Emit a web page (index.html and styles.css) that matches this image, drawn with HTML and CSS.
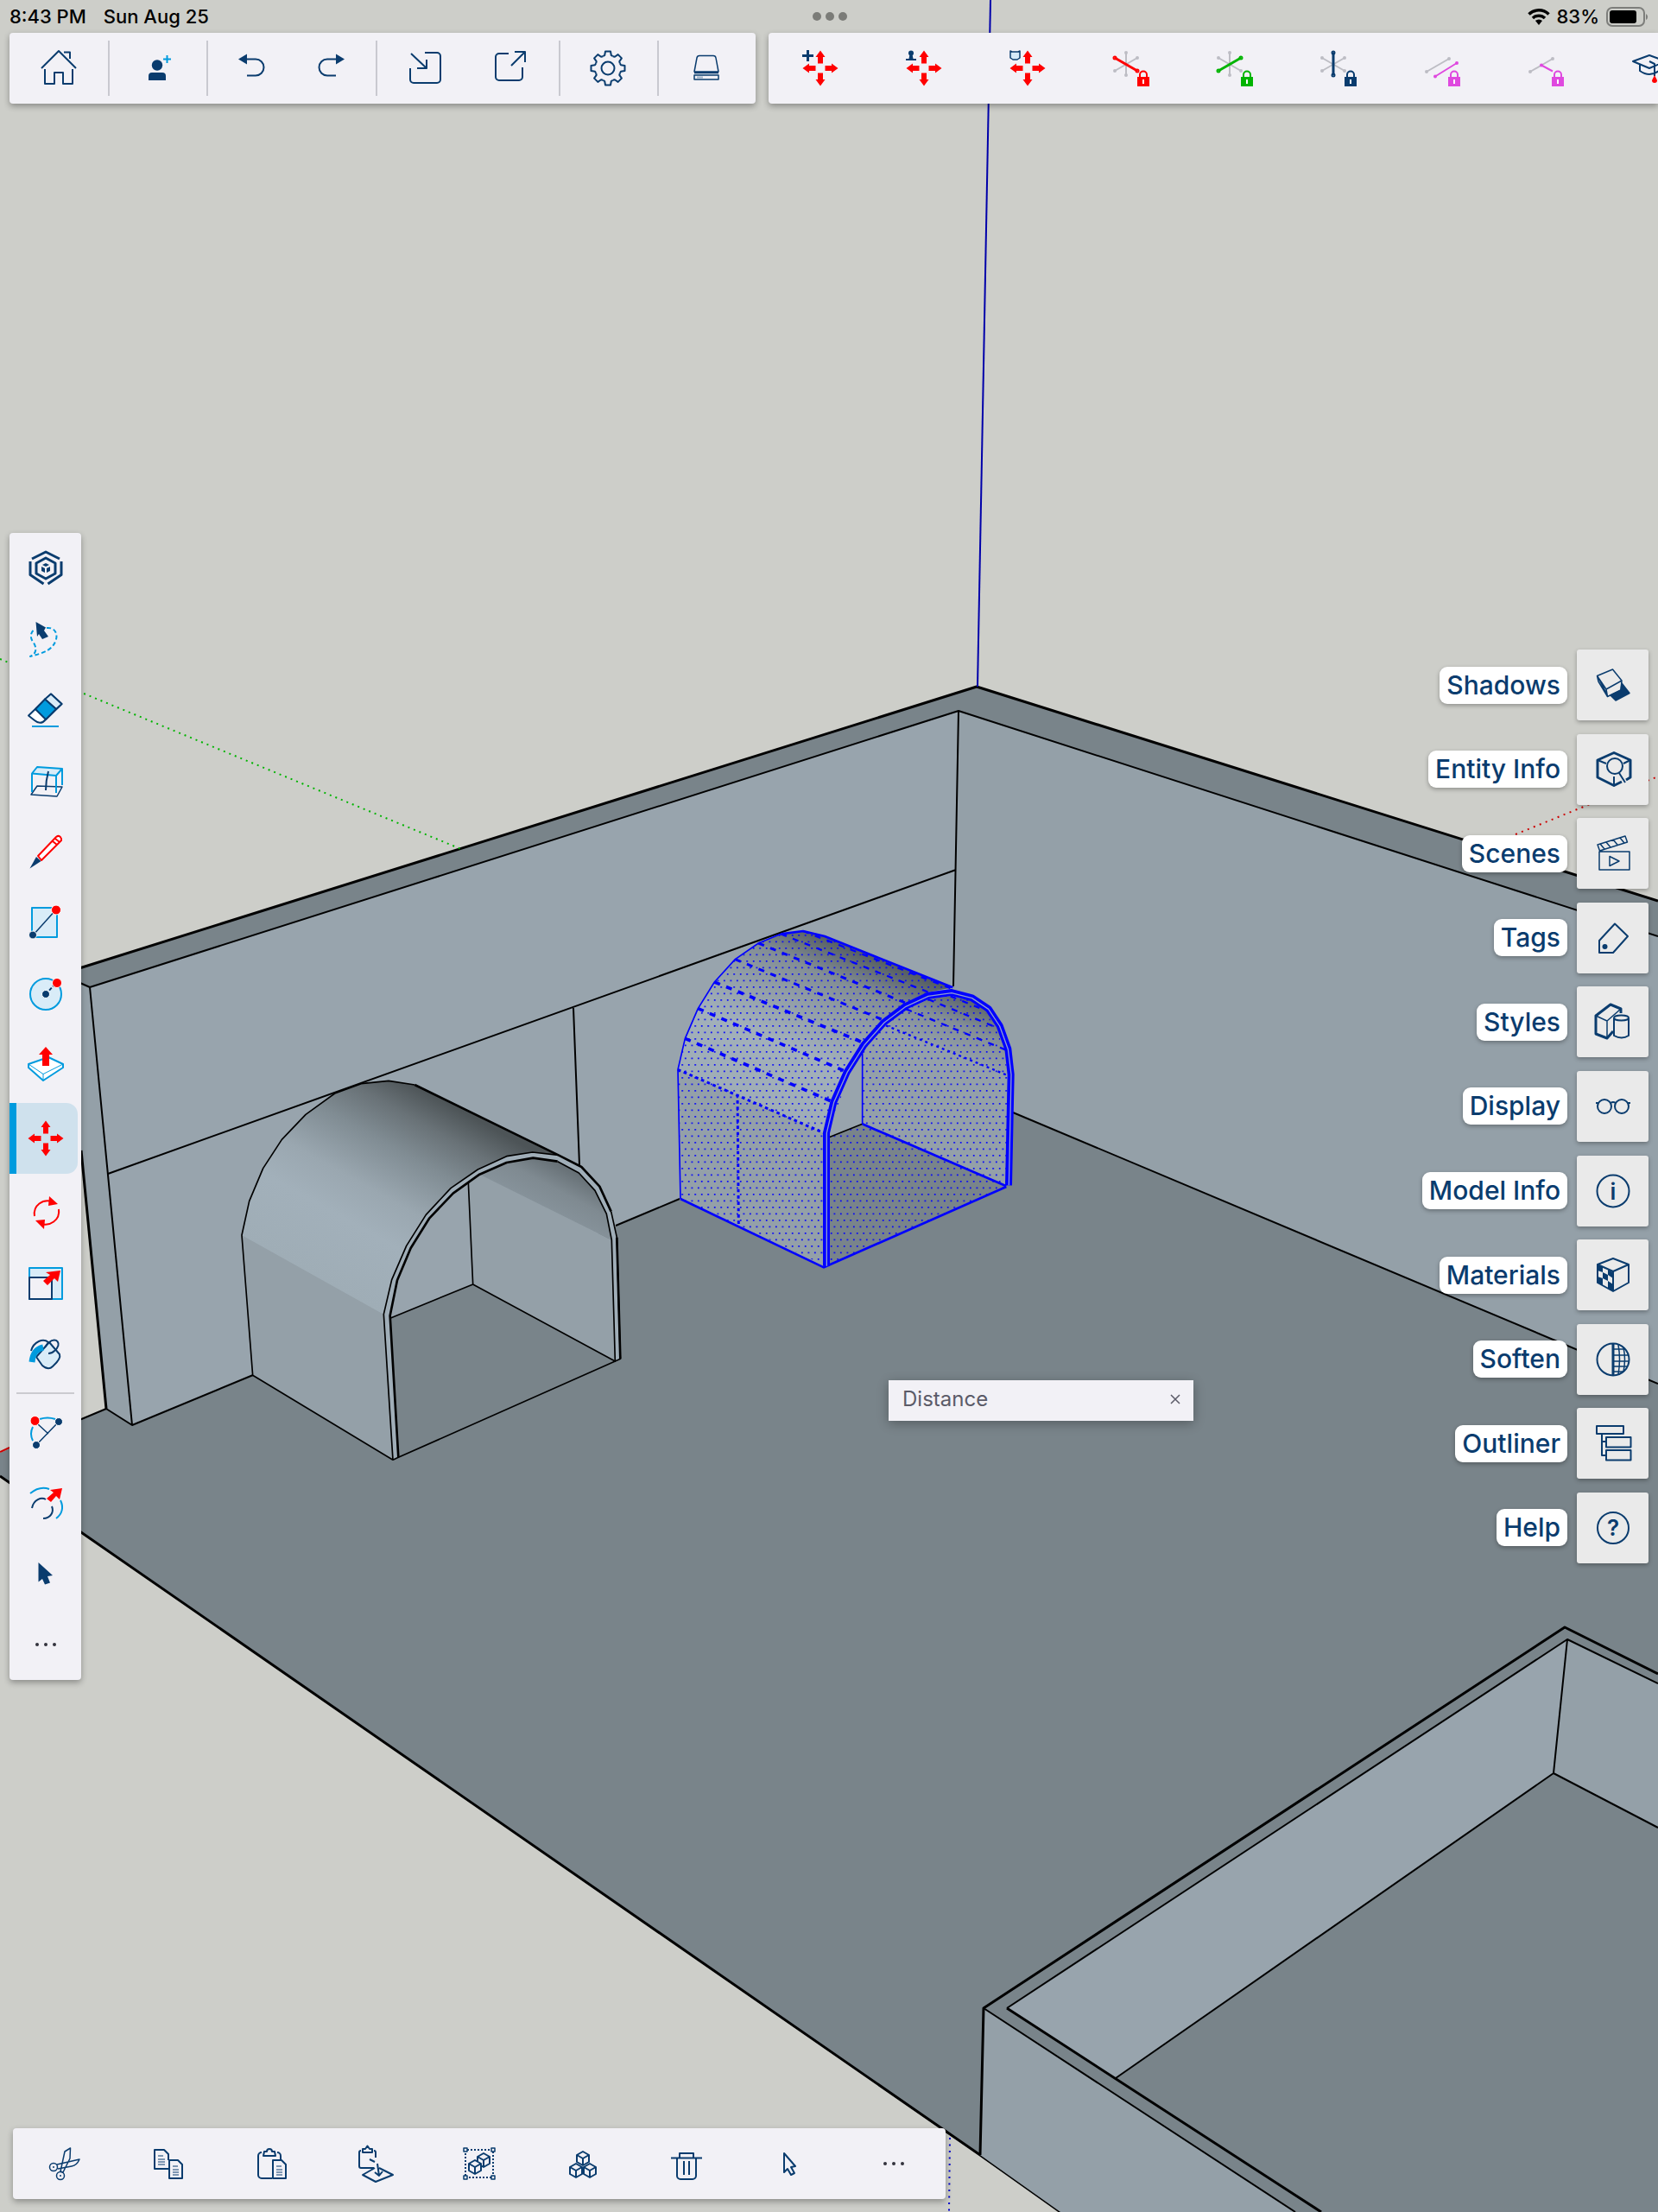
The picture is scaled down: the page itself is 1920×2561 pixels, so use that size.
FILE: index.html
```html
<!DOCTYPE html>
<html lang="en">
<head>
<meta charset="utf-8">
<meta name="viewport" content="width=device-width, initial-scale=1">
<title>3D Modeler</title>
<link rel="stylesheet" href="styles.css">
</head>
<body>
<div class="app">

<svg class="scene" viewBox="0 0 1920 2561" preserveAspectRatio="xMidYMid slice" aria-hidden="true">
  <defs>
    <linearGradient id="vault1" gradientUnits="userSpaceOnUse" x1="60" y1="600" x2="425" y2="-54">
      <stop offset="0" stop-color="#9fadb6"/><stop offset=".3" stop-color="#a2b0ba"/><stop offset=".48" stop-color="#9aa7b0"/><stop offset=".7" stop-color="#808c93"/><stop offset=".86" stop-color="#697277"/><stop offset="1" stop-color="#4d5457"/>
    </linearGradient>
    <linearGradient id="vault2" gradientUnits="userSpaceOnUse" x1="45" y1="535" x2="301" y2="-57">
      <stop offset="0" stop-color="#9fadb6"/><stop offset=".35" stop-color="#a2b0b9"/><stop offset=".6" stop-color="#929ea6"/><stop offset=".78" stop-color="#838e95"/><stop offset="1" stop-color="#50585c"/>
    </linearGradient>
    <linearGradient id="under1" gradientUnits="userSpaceOnUse" x1="1100" y1="500" x2="1190" y2="330">
      <stop offset="0" stop-color="#86929a"/><stop offset=".4" stop-color="#7f8a91"/><stop offset="1" stop-color="#5d666b"/>
    </linearGradient>
    <linearGradient id="under2" gradientUnits="userSpaceOnUse" x1="980" y1="470" x2="1055" y2="280">
      <stop offset="0" stop-color="#929ea6"/><stop offset=".5" stop-color="#838e95"/><stop offset="1" stop-color="#586166"/>
    </linearGradient>
    <pattern id="dots" width="22.5" height="45" patternUnits="userSpaceOnUse" x="58" y="606">
      <path fill="#00f" d="M0 0h5v5H0zM11 22.5h5v5h-5z"/>
    </pattern>
  </defs>

  <!-- floor and walls -->
  <path fill="#79848a" d="M0 1682L94 1643L123 1631L153 1650L1102 1259L1920 1602V2561H1228L0 1709Z"/>
  <path fill="#98a4ad" d="M104 1143L1110 823L1102 1259L153 1650Z"/>
  <path fill="#94a0a8" d="M1110 823L1920 1084V1602L1102 1259Z"/>
  <path fill="#94a0a8" d="M70 1130L104 1143L153 1650L123 1631L94 1332Z"/>
  <path fill="#79848a" d="M60 1131L1131 795L1920 1043V1084L1110 823L104 1143Z"/>
  <g class="edge thick">
    <path d="M60 1131L1131 795L1920 1043"/>
    <path d="M94 1332L123 1631"/>
    <path d="M0 1709L1135 2495L1228 2561"/>
  </g>
  <g class="edge">
    <path d="M84 1134L104 1143L1110 823L1920 1084M104 1143L153 1650L123 1631L80 1649M153 1650L293 1592M713 1419L787 1388M1173 1288L1920 1602"/>
    <path d="M125 1359L1107 1007M1110 823L1104 1142M664 1167L671 1349"/>
  </g>
  <path stroke="#c00" stroke-width="2" d="M0 1681L11 1676"/>

  <!-- model axes -->
  <path stroke="#00a" stroke-width="2" d="M1147 0L1132 795"/>
  <path stroke="#00b400" stroke-width="2" stroke-dasharray="2 5" d="M0 763L534 983"/>
  <path stroke="#c00" stroke-width="2" stroke-dasharray="2 5.500" d="M1755 966L1920 899"/>
  <path stroke="#00c" stroke-width="2" stroke-dasharray="2 5.500" d="M1100 2475L1099 2561"/>

  <!-- sunken pool -->
  <path fill="#98a4ad" d="M1166 2325L1815 1898L1799 2053L1292 2406Z"/>
  <path fill="#94a0a8" d="M1815 1898L1920 1949V2116L1799 2053Z"/>
  <path fill="#94a0a8" d="M1139 2325L1500 2561H1228L1135 2495Z"/>
  <g class="edge">
    <path d="M1920 1949L1815 1898L1166 2325M1815 1898L1799 2053L1292 2406M1799 2053L1920 2116M1139 2325L1500 2561"/>
    <path class="thick" d="M1920 1938L1812 1884L1139 2325L1135 2495M1166 2325L1530 2561"/>
  </g>

  <!-- plain tunnel -->
  <g transform="translate(260 1230) scale(.33333)" stroke-linejoin="round">
    <path fill="#79848a" d="M575 888L863 771L1357 1038L604 1372Z"/>
    <path fill="#98a4ad" d="M575 880L600 757L712 541L847 418L863 771L577 888Z"/>
    <path fill="#94a0a8" d="M847 418L886 389L1345 617L1357 1038L863 771Z"/>
    <path fill="url(#under1)" d="M886 389L980 348L1072 332L1157 344L1231 384L1287 445L1327 526L1345 617Z"/>
    <path fill="#94a0a8" d="M60 600L553 875L585 1381L98 1087Z"/>
    <path fill="url(#vault1)" d="M60 600L86 482L134 368L199 268L282 181L383 108L475 74L570 64L661 78L1160 322L1070 312L980 326L880 372L786 437L700 529L632 637L581 755L553 875Z"/>
    <path fill="#a0aeb8" d="M585 1381L553 875L581 755L632 637L700 529L786 437L880 372L980 326L1070 312L1160 322L1240 363L1303 431L1343 518L1363 608L1375 1030L1357 1038L1345 617L1327 526L1287 445L1231 384L1157 344L1072 332L980 348L886 389L794 455L712 541L647 645L600 757L575 880L604 1372Z"/>
    <g fill="none" stroke="#000" stroke-width="5">
      <path d="M585 1381L98 1087L60 600L86 482L134 368L199 268L282 181L383 108L475 74L570 64L661 78"/>
      <path stroke-width="8" d="M661 78L1160 322L1240 363L1303 431L1343 518"/>
      <path d="M585 1381L553 875L581 755L632 637L700 529L786 437L880 372L980 326L1070 312L1160 322"/>
      <path d="M1343 518L1363 608L1375 1030L1357 1038L1345 617L1327 526L1287 445L1231 384L1157 344"/>
      <path stroke-width="8" d="M1157 344L1072 332L980 348L886 389L794 455L712 541L647 645L600 757L575 880L604 1372M1363 608L1375 1030"/>
      <path d="M847 418L863 771L577 888M863 771L1357 1038L604 1372L585 1381"/>
    </g>
  </g>

  <!-- selected tunnel -->
  <g transform="translate(770 1060) scale(.33333)" stroke-linejoin="round">
    <path fill="#79848a" d="M570 770L686 724L1186 940L570 1217Z"/>
    <path fill="#98a4ad" d="M570 755L640 548L686 478V724L570 770Z"/>
    <path fill="#94a0a8" d="M686 478L765 380L1195 555L1186 940L686 724Z"/>
    <path fill="url(#under2)" d="M765 380L838 328L915 291L992 280L1065 296L1115 330L1155 390L1185 467L1195 555Z"/>
    <path fill="#94a0a8" d="M45 535L552 755V1222L54 984Z"/>
    <path fill="url(#vault2)" d="M45 535L70 427L115 323L172 231L244 152L325 96L403 64L480 54L555 72L1000 250L915 266L835 303L757 362L686 440L625 540L578 645L552 755Z"/>
    <path fill="url(#dots)" d="M45 535L70 427L115 323L172 231L244 152L325 96L403 64L480 54L555 72L1065 275L1155 390L1195 555L1186 940L560 1217L54 984ZM570 770L686 724V478L640 548L570 755Z" fill-rule="evenodd"/>
    <path fill="none" stroke="#000" stroke-width="5" d="M570 770L686 724"/>
    <g fill="none" stroke="#00f" stroke-width="8">
      <path stroke-width="5" d="M403 64L325 96L244 152L172 231L115 323L70 427L45 535L54 984"/>
      <path d="M54 984L552 1222L1186 942M403 64L480 54L555 72L1000 250M686 724L1186 940"/>
      <path stroke-width="5" d="M686 478V724"/>
      <path stroke-width="24" d="M561 1217V755L586 648L632 544L692 449L761 371L836 315L915 278L996 267L1067 286L1124 324L1163 383L1192 463L1202 552L1194 937"/>
      <path stroke="#8f9dd0" stroke-width="4" d="M562 1217V755L587 649L633 545L693 450L762 372L837 316L915 280L996 269L1067 287L1124 325L1163 384L1192 464L1203 552L1195 937"/>
      <g stroke-dasharray="21 23">
        <path d="M70 427L578 645M115 323L625 540M172 231L686 440" stroke-width="11"/>
        <path d="M244 152L757 362M325 96L835 303" stroke-width="9"/>
        <path d="M403 64L915 266M480 54L1000 256M838 325L1185 467M915 291L1155 390M992 280L1115 330" stroke-width="7"/>
      </g>
      <path stroke-dasharray="11 11" stroke-width="9" d="M45 535L552 755M252 620L256 1080"/>
      <path stroke-dasharray="9 12" stroke-width="7" d="M768 382L1190 555"/>
    </g>
  </g>
</svg>

<svg class="sprites" aria-hidden="true">
  <defs>
    <path id="arm" d="M0-20.5L5.5-13H3V-5.500H-3V-13H-5.500Z"/>
    <g id="arrows"><use href="#arm"/><use href="#arm" transform="rotate(90)"/><use href="#arm" transform="rotate(180)"/><use href="#arm" transform="rotate(270)"/></g>
    <path id="tooth" d="M-5.700-13.800L-3.800-15L-3-19.500H3L3.800-15L5.700-13.800"/>
    <g id="lock" stroke="none"><path fill="currentColor" d="M7 10h14v11H7z"/><path fill="none" stroke="currentColor" stroke-width="2" d="M10 10V7.500a4 4 0 0 1 8 0V10"/><path fill="#fff" d="M13 13h2v5h-2z"/></g>
    <g id="spokeV"><path d="M-6-18V8"/><circle cx="-6" cy="-18" r="1"/><circle cx="-6" cy="8" r="1"/></g>
    <g id="spokeD"><path d="M-19-12L7 3"/><circle cx="-19" cy="-12" r="1"/><circle cx="7" cy="3" r="1"/></g>
    <g id="spokeU"><path d="M-19 3L7-12"/><circle cx="-19" cy="3" r="1"/><circle cx="7" cy="-12" r="1"/></g>
    <g id="page"><path d="M1-4H11L16 1V17H1Z"/><path stroke-width="1" d="M5 3h6M5 7h7M5 10h7M5 13h7"/></g>
    <g id="cube"><path d="M0-8L7-4V4L0 8L-7 4V-4Z"/><path d="M-7-4L0 0L7-4M0 0V8"/></g>
  </defs>
</svg>

<header class="status">
  <div class="status-side"><time>8:43 PM</time><span>Sun Aug 25</span></div>
  <div class="status-dots"><i></i><i></i><i></i></div>
  <div class="status-side status-end">
    <svg width="26" height="20" viewBox="0 0 26 20" fill="none" stroke="#000" stroke-width="3.500" aria-label="Wi-Fi"><path d="M1.500 7.500a16.500 16.500 0 0 1 23 0M6 12a10 10 0 0 1 14 0"/><path fill="#000" stroke="none" d="M13 20l-4-5a6 6 0 0 1 8 0z"/></svg>
    <span>83%</span>
    <svg class="battery" width="50" height="23" viewBox="0 0 50 23" aria-label="Battery"><rect x="1" y="1" width="43" height="21" rx="6" fill="none" stroke="#7d7e7b" stroke-width="2"/><rect x="4" y="4" width="31" height="15" rx="3"/><path fill="#7d7e7b" d="M46 8a4 4 0 0 1 0 7z"/></svg>
  </div>
</header>

<nav class="topbars">
  <div class="bar">
    <div class="group"><button aria-label="Home"><svg class="ico" viewBox="-22 -22 44 44"><path d="M-20 0L0-20L20 0M-16 1V18H-5V5H5V18H16V1M6-18.500H13V-11"/></svg></button></div>
    <div class="group"><button aria-label="Invite"><svg class="ico" viewBox="-22 -22 44 44"><g fill="currentColor" stroke="none"><circle cy="-3.500" r="6.200"/><path d="M-10 14V9a4 4 0 0 1 4-4H6a4 4 0 0 1 4 4v5z"/></g><path stroke="#009bde" d="M7-10.500h9M11.500-15v9"/></svg></button></div>
    <div class="group narrow">
      <button aria-label="Undo"><svg class="ico" viewBox="-22 -22 44 44"><path d="M-8-10.500H4A9.500 9.500 0 0 1 4 8.500H-6"/><path fill="currentColor" stroke="none" d="M-16-10.500l10-6v12z"/></svg></button>
      <button aria-label="Redo"><svg class="ico" viewBox="-22 -22 44 44"><path d="M8-10.500H-4A9.500 9.500 0 0 0-4 8.500H6"/><path fill="currentColor" stroke="none" d="M16-10.500l-10-6v12z"/></svg></button>
    </div>
    <div class="group wide">
      <button aria-label="Import"><svg class="ico" viewBox="-22 -22 44 44"><path d="M0-18H14a4 4 0 0 1 4 4V13a4 4 0 0 1-4 4H-13a4 4 0 0 1-4-4V0M-16-17L2 0V-10M2 0H-9"/></svg></button>
      <button aria-label="Export"><svg class="ico" viewBox="-22 -22 44 44"><path d="M-2-17H-13a4 4 0 0 0-4 4V10a4 4 0 0 0 4 4H10a4 4 0 0 0 4-4V-1M1-3L17-19V-7M17-19H5"/></svg></button>
    </div>
    <div class="group"><button aria-label="Settings"><svg class="ico" viewBox="-22 -22 44 44"><circle r="7.500"/><use href="#tooth"/><use href="#tooth" transform="rotate(45)"/><use href="#tooth" transform="rotate(90)"/><use href="#tooth" transform="rotate(135)"/><use href="#tooth" transform="rotate(180)"/><use href="#tooth" transform="rotate(225)"/><use href="#tooth" transform="rotate(270)"/><use href="#tooth" transform="rotate(315)"/></svg></button></div>
    <div class="group"><button aria-label="Storage"><svg class="ico thin" viewBox="-22 -22 44 44"><path d="M-14 4L-11-12a3 3 0 0 1 3-2.500H8a3 3 0 0 1 3 2.500L14 4zM-14 5.500H14M-14 8H14V13H-14z"/><path fill="#9fb3c8" stroke="none" d="M-11 9.500h7v2h-7z"/></svg></button></div>
  </div>

  <div class="bar bleed">
    <button aria-label="Move copy"><svg class="ico" viewBox="-22 -22 44 44"><use class="red" href="#arrows"/><path stroke-width="3" d="M-21-14.500h13M-14.500-21v13"/></svg></button>
    <button aria-label="Move stamp"><svg class="ico" viewBox="-22 -22 44 44"><use class="red" href="#arrows"/><g fill="currentColor" stroke="none"><circle cx="-15" cy="-17.500" r="3"/><path d="M-16.500-16h3l1 5h-5zM-21-11h12v2h-12z"/></g></svg></button>
    <button aria-label="Move and paste"><svg class="ico" viewBox="-22 -22 44 44"><use class="red" href="#arrows"/><path fill="#d5eaf8" stroke-width="1.500" d="M-20-20l2 1h7l2-1V-12l-3 2h-5l-3-2z"/></svg></button>
    <button aria-label="Lock red axis"><svg class="ico" viewBox="-22 -22 44 44"><g class="gray"><use href="#spokeV"/><use href="#spokeU"/></g><g color="#f00" stroke="#f00" stroke-width="3"><use href="#spokeD"/><use href="#lock"/></g></svg></button>
    <button aria-label="Lock green axis"><svg class="ico" viewBox="-22 -22 44 44"><g class="gray"><use href="#spokeV"/><use href="#spokeD"/></g><g color="#00b400" stroke="#00b400" stroke-width="3"><use href="#spokeU"/><use href="#lock"/></g></svg></button>
    <button aria-label="Lock blue axis"><svg class="ico" viewBox="-22 -22 44 44"><g class="gray"><use href="#spokeU"/><use href="#spokeD"/></g><g stroke-width="3"><use href="#spokeV"/><use href="#lock"/></g></svg></button>
    <button aria-label="Lock parallel"><svg class="ico" viewBox="-22 -22 44 44"><g class="gray"><path d="M-18 4L8-11"/><circle cx="-18" cy="4" r="1"/><circle cx="8" cy="-11" r="1"/></g><g color="#df49df" stroke="#df49df"><path d="M-8 9.500L17-6"/><circle cx="-8" cy="9.500" r="1"/><circle cx="17" cy="-6" r="1"/><use href="#lock"/></g></svg></button>
    <button aria-label="Lock perpendicular"><svg class="ico" viewBox="-22 -22 44 44"><g class="gray"><path d="M-18 4L8-11"/><circle cx="-18" cy="4" r="1"/><circle cx="8" cy="-11" r="1"/></g><g color="#df49df" stroke="#df49df"><path d="M-5-3.500L8 3.500"/><circle cx="-5" cy="-3.500" r="1"/><use href="#lock"/></g></svg></button>
    <button aria-label="Learn"><svg class="ico" viewBox="-22 -22 44 44"><path d="M-19-8L0-15L19-8L0 0ZM-11-5V3Q0 11 11 3V-5M0-8L6-5V9"/><path fill="#f00" stroke="none" d="M6 8l3 6a3 3 0 0 1-6 0z"/></svg></button>
  </div>
</nav>

<main class="workspace">
  <nav class="tools">
    <button aria-label="Home base"><svg class="ico" viewBox="-22 -22 44 44"><path stroke-width="3" d="M-16-11L0-19L16-11M-18-8V7.500L-2.500 18M18-8V7.500L2.500 18M0-12L11-6V6L0 12L-11 6V-6Z"/><path fill="currentColor" stroke="none" d="M0-6L4-4L0-2L-4-4ZM-5-2L-1 0V5L-5 3ZM5-2L1 0V5L5 3Z"/></svg></button>
    <button aria-label="Lasso"><svg class="ico" viewBox="-22 -22 44 44"><path class="blue" stroke-dasharray="5 3" d="M1-13C10-14 14-7 12 0C9 12-2 16-18 20C-9 16-11 8-15 3C-19-3-17-9-13-11"/><path fill="currentColor" stroke="none" d="M-11.500-20L0-13.500L-2-10L3-3L-4 0L-8-6L-10-3Z"/></svg></button>
    <button aria-label="Eraser"><svg class="ico" viewBox="-22 -22 44 44"><path fill="#fff" d="M6-18.500L18.500-7L0 11Q-6 18-13 12L-20 6.500Z"/><path fill="#d9ecf8" d="M6-18.500L18.500-7L12-1L-1-12.500Z"/><path fill="#009bde" d="M-1-12.500L12-1L0 11L-12-1Z"/><path class="blue" d="M-16 19H15"/></svg></button>
    <button aria-label="Section plane"><svg class="ico" viewBox="-22 -22 44 44"><path stroke-width="1.500" d="M-10 6L19 7L13 18L-17 16Z"/><path class="blue pale" d="M-10-16L19-14L12-6L-16-8.500Z"/><path class="blue" d="M-16-8V13M12-6V14M19-14V5"/><path d="M3-11Q0 0 0 11"/></svg></button>
    <button aria-label="Line"><svg class="ico" viewBox="-22 -22 44 44"><path fill="currentColor" stroke="none" d="M-18.500 19.500L-11 6L-5.500 11Z"/><path fill="#fff" stroke="#f00" d="M-9 5L12-17Q16-20 18-15L18-13L-5 10ZM8-12L13-8M11-15L16-11"/></svg></button>
    <button aria-label="Rectangle"><svg class="ico" viewBox="-22 -22 44 44"><path class="blue pale" d="M-16-17H13V17H-16Z"/><path stroke-width="1.500" d="M-15 15L12-15"/><circle class="dot" cx="-15" cy="14.500" r="4.500"/><circle class="dot hot" cx="12" cy="-14.500" r="5.500"/></svg></button>
    <button aria-label="Circle"><svg class="ico" viewBox="-22 -22 44 44"><circle class="blue pale" cy="1" r="18"/><path d="M0 1L12-12" stroke-dasharray="4 2"/><circle class="dot" cy="1" r="4.500"/><circle class="dot hot" cx="13" cy="-12" r="5.500"/></svg></button>
    <button aria-label="Push pull"><svg class="ico" viewBox="-22 -22 44 44"><path class="blue" fill="#fff" d="M-20 0L3-8L20 0V4L-3 19L-20 4Z"/><path class="blue" stroke-width="1" d="M-20 0L-3 11.500L20 0M-3 11.500V19"/><path class="red" stroke="#fff" d="M0-20L8-11H4V2H-4V-11H-8Z"/></svg></button>
    <button class="active" aria-label="Move" aria-pressed="true"><svg class="ico" viewBox="-22 -22 44 44"><use class="red" href="#arrows"/></svg></button>
    <button aria-label="Rotate"><svg class="ico" viewBox="-22 -22 44 44"><g stroke="#f00"><path d="M-13 4C-15-9-3-16 7-13M15-4C17 9 4 16-5 13"/></g><path class="red" d="M4-19L14-10L3-8ZM-2 19L-12 9L-1 8Z"/></svg></button>
    <button aria-label="Scale"><svg class="ico" viewBox="-22 -22 44 44"><path class="blue pale" d="M-19-18H19V18H-19Z"/><path fill="#f2f1f6" d="M-19-7H7V18H-19Z"/><path class="red" d="M17-15L14-2L10-6L2 2L-3-3L5-10L0-13Z"/></svg></button>
    <button aria-label="Paint"><svg class="ico" viewBox="-22 -22 44 44"><path fill="#d9ecf8" d="M-11 3L4-14L16 0Q18 5 8 14Q3 19-4 13Z"/><path d="M-17-4C-14-15-3-19 3-14L-1-8M4-14C12-21 20-12 10-4Q7-1 3-1"/><path stroke="#009bde" stroke-width="7" d="M-3-8C-12-6-15 0-16 9"/></svg></button>
    <hr>
    <button aria-label="Arc"><svg class="ico" viewBox="-22 -22 44 44"><path class="blue" d="M-7-15Q2-18 11-15M-15-6Q-19 2-15 10"/><path stroke-width="1.500" d="M-9-9L3 2M-11 15L15-12"/><circle class="dot hot" cx="-12.500" cy="-13" r="5.500"/><circle class="dot" cx="15" cy="-12" r="4.500"/><circle class="dot" cx="-11" cy="15" r="4.500"/></svg></button>
    <button aria-label="Offset"><svg class="ico" viewBox="-22 -22 44 44"><path class="blue" d="M-18-11Q-7-20 4-16M17-3C21 5 19 13 12 18"/><path d="M-16 6C-14-4-5-7 0-4M7 4C10 11 5 18-3 18"/><path class="red" d="M19-17L16-4L12-8L6-1L1-5L9-12L5-15Z"/></svg></button>
    <button aria-label="Select"><svg class="ico" viewBox="-22 -22 44 44"><path fill="currentColor" stroke="none" d="M-8.500-13L8 2L2 3L5 10.500L-1 12.500L-4 6L-8.500 9.500Z"/></svg></button>
    <button aria-label="More tools"><svg class="ico" viewBox="-22 -22 44 44"><g fill="#33333d" stroke="none"><circle cx="-10" r="2"/><circle r="2"/><circle cx="10" r="2"/></g></svg></button>
  </nav>

  <nav class="panels">
    <button><span class="label">Shadows</span><span class="tile"><svg class="ico thin" viewBox="-22 -22 44 44"><path d="M-18.500-10.500L-.5-18L10-5L-8 5ZM-18.500-10.500L-17-4L-6.500 13.500L-8 5M-6.500 13.500L9 6L10-5M-17-8L-7 11"/><path fill="currentColor" d="M10-2L19 9.500L3 18L-3 12L9 6Z"/></svg></span></button>
    <button><span class="label">Entity Info</span><span class="tile"><svg class="ico" viewBox="-22 -22 44 44"><path stroke-width="3" d="M10 14L1 18.500L-18 9V-11L1-19.500L20-11V9L15 12"/><circle cx="2" cy="-4" r="9"/><path d="M-18-11L-8-7M20-11L12-7M1 8V18M7 4L14 15"/></svg></span></button>
    <button><span class="label">Scenes</span><span class="tile"><svg class="ico thin" viewBox="-22 -22 44 44"><path d="M-16-2H19V19H-16ZM-4 3.500L7 9L-4 14.500ZM-18-10L14-20L16.500-13L-15.500-3ZM-15-11L-10-5M-8-13L-3-7M0-16L5-10M8-18L13-12M-13-4V-2"/></svg></span></button>
    <button><span class="label">Tags</span><span class="tile"><svg class="ico" viewBox="-22 -22 44 44"><path d="M-16 17V3L2-16.500L17-2L0 17Z"/><circle cx="-9.500" cy="10" r="3" fill="currentColor" stroke="none"/></svg></span></button>
    <button><span class="label">Styles</span><span class="tile"><svg class="ico" viewBox="-22 -22 44 44"><path stroke-width="3" d="M9-10V-15L-3-20L-20-7V14L-7 19L0 11"/><path stroke-width="1.500" d="M-20-7L-7-1L9-15M-7-1V19"/><path d="M1-4V16Q10 21 18 16V-4"/><ellipse cx="9.500" cy="-4.500" rx="8.500" ry="3"/></svg></span></button>
    <button><span class="label">Display</span><span class="tile"><svg class="ico" viewBox="-22 -22 44 44"><circle cx="-10" r="8"/><circle cx="10" r="8"/><path d="M-20-4H-17M17-4H20M-3-4Q0-6 3-4"/></svg></span></button>
    <button><span class="label">Model Info</span><span class="tile"><svg class="ico" viewBox="-22 -22 44 44"><circle r="18.500"/><text y="10">i</text></svg></span></button>
    <button><span class="label">Materials</span><span class="tile"><svg class="ico" viewBox="-22 -22 44 44"><path d="M0-19L18-12V9L0 19L-18 9V-12ZM-18-12L0-4L18-12M0-4V19"/><path fill="currentColor" stroke="none" d="M-18-12L-12-9V-3L-18-5ZM-12-3L-6 0V7L-12 4ZM-6-6L0-3V4L-6 0ZM-18 2L-12 4V12L-18 9ZM-6 7L0 11V19L-6 15Z"/></svg></span></button>
    <button><span class="label">Soften</span><span class="tile"><svg class="ico" viewBox="-22 -22 44 44"><circle r="18.500"/><path stroke-width="3" d="M0-18V18"/><path stroke-width="1.500" d="M6-17Q9 0 6 17M12-14Q15 0 12 14M0-12H14M0-5H18M0 2H18M0 8H17M0 14H12"/></svg></span></button>
    <button><span class="label">Outliner</span><span class="tile"><svg class="ico" viewBox="-22 -22 44 44"><path d="M-19-20H12V-11H-19ZM-8-7H20.500V4.500H-8ZM-8 8H20.500V19.500H-8ZM-13-11V14H-8M-13-2H-8"/></svg></span></button>
    <button><span class="label">Help</span><span class="tile"><svg class="ico" viewBox="-22 -22 44 44"><circle r="18"/><text y="9">?</text></svg></span></button>
  </nav>
</main>

<footer class="bottom">
  <div class="bar">
    <button aria-label="Cut"><svg class="ico thin" viewBox="-22 -22 44 44"><circle cx="-13" cy="4" r="4.500"/><circle cx="-5" cy="14" r="4.500"/><path d="M6.500-18L0-14L-5 9L-2 10L6-6ZM-9 1L17-5Q14 2 8 3L-8 6M-13 3v2M-5 13v2"/></svg></button>
    <button aria-label="Copy"><svg class="ico" viewBox="-22 -22 44 44"><path d="M0 6H-16V-16H-5L0-11V-4"/><path stroke-width="1" d="M-12-9h6M-12-5h8M-12-2h8M-12 1h8"/><use href="#page"/></svg></button>
    <button aria-label="Paste"><svg class="ico" viewBox="-22 -22 44 44"><path d="M0 17H-12a4 4 0 0 1-4-4V-9a4 4 0 0 1 4-4M6-13a4 4 0 0 1 4 4v4M-10-9H4L3-14H0a3 3 0 0 0-6 0H-9Z"/><use href="#page"/></svg></button>
    <button aria-label="Paste in place"><svg class="ico" viewBox="-22 -22 44 44"><path d="M-2 5H-17a2 2 0 0 1-2-2V-13a2 2 0 0 1 2-2M-2-15a2 2 0 0 1 2 2V-7M-15-13H-4V-17H-7L-9.500-20.500L-12-17H-15ZM-7-5L-1-2M-1 5L-15 13L0 21L20 13L4 5M2 0L4 14M-1 10L4 14L8 9"/></svg></button>
    <button aria-label="Group"><svg class="ico" viewBox="-22 -22 44 44"><path stroke-dasharray="2 2" d="M-14-16H14M16-14V14M14 16H-14M-16 14V-14"/><path fill="#f2f1f6" stroke-width="1.500" d="M-18-18h4v4h-4zM14-18h4v4h-4zM14 14h4v4h-4zM-18 14h4v4h-4z"/><g stroke-width="2"><use href="#cube" x="5" y="-4"/><g fill="#f2f1f6"><use href="#cube" x="-5" y="4"/></g></g></svg></button>
    <button aria-label="Components"><svg class="ico" viewBox="-22 -22 44 44"><use href="#cube" y="-6"/><use href="#cube" x="-8" y="8"/><use href="#cube" x="8" y="8"/></svg></button>
    <button aria-label="Delete"><svg class="ico" viewBox="-22 -22 44 44"><path d="M-18-6.500H18M-8-7V-12H8V-7M-11-6V14a4 4 0 0 0 4 4H7a4 4 0 0 0 4-4V-6M-3-3V13M3-3V13"/></svg></button>
    <button aria-label="Select"><svg class="ico" viewBox="-22 -22 44 44"><path d="M-7-12L6 3L1 4L5 11L1 13L-3 6L-7 10Z"/></svg></button>
    <button aria-label="More"><svg class="ico" viewBox="-22 -22 44 44"><g fill="#33333d" stroke="none"><circle cx="-10" r="2"/><circle r="2"/><circle cx="10" r="2"/></g></svg></button>
  </div>
</footer>

<form class="measure">
  <input type="text" placeholder="Distance" aria-label="Distance">
  <button type="button" aria-label="Close"><svg width="12" height="12" viewBox="0 0 12 12"><path stroke="#5b5b68" stroke-width="1.500" d="M1 1L11 11M11 1L1 11"/></svg></button>
</form>

</div>
</body>
</html>
```
FILE: styles.css
```css
* { box-sizing: border-box; }

body {
  margin: 0;
  background: #cdcec9;
  color: #0a3c6e;
  font-family: Inter, "Liberation Sans", sans-serif;
}

button {
  display: flex;
  align-items: center;
  justify-content: center;
  margin: 0;
  padding: 0;
  border: 0;
  background: none;
  color: inherit;
  font: inherit;
}

.app {
  position: relative;
  display: flex;
  flex-direction: column;
  min-height: 100vh;
  overflow: hidden;
}

/* model canvas behind the controls */
.scene {
  position: absolute;
  inset: 0;
  width: 100%;
  height: 100%;
  fill: none;
}
.edge { fill: none; stroke: #000; stroke-width: 2; stroke-linejoin: round; }
.thick { stroke-width: 3; }
.sprites { position: absolute; width: 0; height: 0; }

.status, .topbars, .workspace, .bottom { position: relative; }

/* status bar */
.status {
  display: grid;
  grid-template-columns: 1fr auto 1fr;
  align-items: center;
  height: 38px;
  padding: 0 10px 0 11px;
  color: #000;
  font-size: 22px;
  font-weight: 500;
}
.status-side { display: flex; align-items: center; gap: 20px; }
.status-end { justify-content: flex-end; gap: 8px; }
.status-dots { display: flex; gap: 5px; }
.status-dots i { width: 10px; height: 10px; border-radius: 50%; background: #7b7c78; }

/* icons */
.ico {
  width: 44px;
  height: 44px;
  overflow: visible;
  fill: none;
  stroke: currentColor;
  stroke-width: 2;
  stroke-linejoin: round;
}
.ico.thin { stroke-width: 1.5px; }
.ico text { fill: currentColor; stroke: none; font-size: 26px; font-weight: 600; text-anchor: middle; }
.red { fill: #f00; stroke: none; }
.gray { stroke: #bdbdc4; }
.blue { stroke: #009bde; }
.pale { fill: #d9ecf8; }
.dot { fill: #0a3c6e; stroke: #fff; stroke-width: 1; }
.hot { fill: #f00; }

/* floating bars */
.bar {
  display: flex;
  height: 82px;
  border-radius: 4px;
  background: #f2f1f6;
  box-shadow: 0 3px 7px rgba(0, 0, 0, .32);
}
.topbars { display: flex; gap: 15px; padding-left: 11px; }
.group { display: flex; align-items: center; padding: 0 7px; }
.group button { width: 100px; height: 82px; }
.group.narrow button { width: 91px; }
.group.wide button { width: 99px; }
.group + .group { background: linear-gradient(#c9c9d0, #c9c9d0) left center / 2px 64px no-repeat; }
.bleed { flex: 1; min-width: 0; border-radius: 4px 0 0 4px; overflow: hidden; }
.bleed button, .bottom button { flex: none; width: 120px; }

/* side docks */
.workspace {
  flex: 1;
  display: flex;
  align-items: center;
  justify-content: space-between;
  padding: 0 11px 22px;
}
.tools {
  display: flex;
  flex-direction: column;
  width: 83px;
  height: 1328px;
  border-radius: 4px;
  background: #f2f1f6;
  box-shadow: 0 3px 7px rgba(0, 0, 0, .32);
}
.tools button { flex: 1 1 0; min-height: 0; }
.tools hr { width: 67px; height: 2px; margin: 3px auto; border: 0; background: #cbcbd0; }
.tools .active {
  border: 4px solid transparent;
  border-left: 0;
  border-radius: 0 17px 17px 0;
  padding-left: 4px;
  background:
    linear-gradient(#009bde, #009bde) left / 8px 100% no-repeat,
    #cfe1ed;
  background-clip: padding-box;
}

.panels {
  display: flex;
  flex-direction: column;
  align-items: flex-end;
  justify-content: space-between;
  height: 1058px;
}
.panels button { gap: 11px; }
.label {
  padding: 0 8px;
  border-radius: 9px;
  background: #fff;
  font-size: 30px;
  font-weight: 500;
  line-height: 43px;
  box-shadow: 0 2px 5px rgba(0, 0, 0, .3);
}
.tile {
  display: flex;
  align-items: center;
  justify-content: center;
  width: 83px;
  height: 82px;
  border-radius: 3px;
  background: #eaeaea;
  box-shadow: 0 2px 5px rgba(0, 0, 0, .3);
}

.bottom { display: flex; padding: 0 15px 15px; }

/* measurement box floats over the model */
.measure {
  position: absolute;
  left: 1029px;
  top: 1598px;
  display: flex;
  align-items: center;
  width: 353px;
  height: 47px;
  padding: 0 15px 4px 16px;
  background: #f2f1f6;
  box-shadow: 0 3px 12px rgba(0, 0, 0, .3);
}
.measure input {
  flex: 1;
  min-width: 0;
  padding: 0;
  border: 0;
  background: none;
  color: #5b5b68;
  font: 400 24px/30px Inter, "Liberation Sans", sans-serif;
}
.measure input::placeholder { color: #5b5b68; opacity: 1; }
```
